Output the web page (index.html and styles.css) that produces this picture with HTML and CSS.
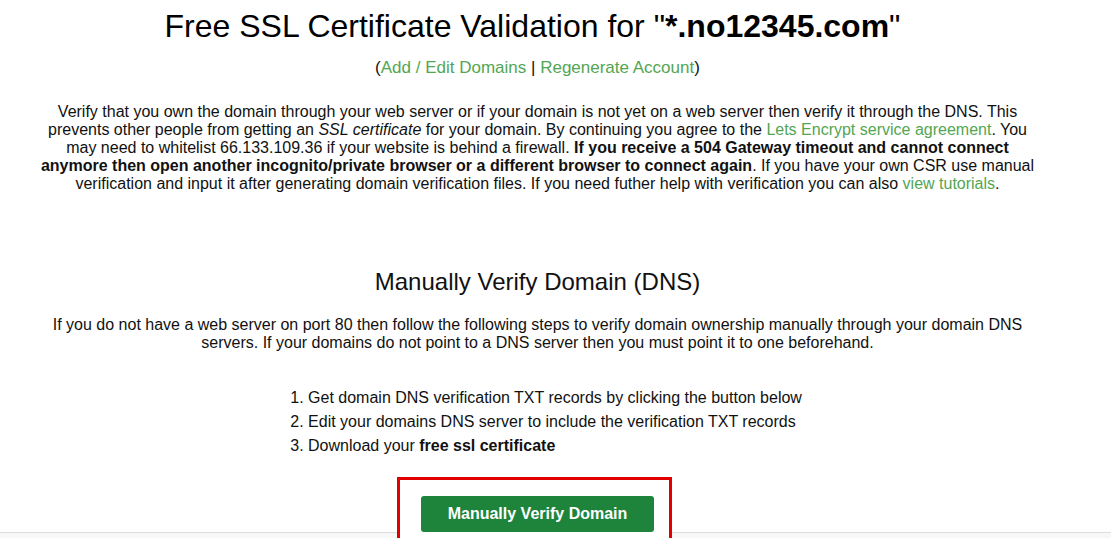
FILE: index.html
```html
<!DOCTYPE html>
<html lang="en">
<head>
  <meta charset="UTF-8" />
  <meta name="viewport" content="width=device-width, initial-scale=1.0"/>
  <title>Free SSL Certificate Validation</title>
  <link rel="stylesheet" href="styles.css">
</head>
<body>
  <main class="page">
    <h1 class="title">Free SSL Certificate Validation for "<strong>*.no12345.com</strong>"</h1>
    <p class="account-links">(<a href="#">Add / Edit Domains</a> | <a href="#">Regenerate Account</a>)</p>

    <p class="intro">
      Verify that you own the domain through your web server or if your domain is not yet on a web server then verify it through the DNS. This
      prevents other people from getting an <em>SSL certificate</em> for your domain. By continuing you agree to the <a href="#">Lets Encrypt service agreement</a>. You
      may need to whitelist 66.133.109.36 if your website is behind a firewall. <strong>If you receive a 504 Gateway timeout and cannot connect
      anymore then open another incognito/private browser or a different browser to connect again</strong>. If you have your own CSR use manual
      verification and input it after generating domain verification files. If you need futher help with verification you can also <a href="#">view tutorials</a>.
    </p>

    <section class="manual">
      <h2 class="manual-title">Manually Verify Domain (DNS)</h2>
      <p class="manual-text">
        If you do not have a web server on port 80 then follow the following steps to verify domain ownership manually through your domain DNS
        servers. If your domains do not point to a DNS server then you must point it to one beforehand.
      </p>

      <div class="steps-wrap">
        <ol class="steps">
          <li>Get domain DNS verification TXT records by clicking the button below</li>
          <li>Edit your domains DNS server to include the verification TXT records</li>
          <li>Download your <strong>free ssl certificate</strong></li>
        </ol>
      </div>

      <div class="actions">
        <div class="button-wrap">
          <span class="highlight"></span>
          <button class="btn-verify">Manually Verify Domain</button>
        </div>
      </div>
    </section>
  </main>

  <footer class="footer"></footer>
</body>
</html>
```

FILE: styles.css
```css
* {
  margin: 0;
  padding: 0;
  box-sizing: border-box;
}

body {
  font-family: "Liberation Sans", Arial, sans-serif;
  font-size: 16px;
  color: #111;
  background-color: #fff;
}

a {
  color: #53a653;
  text-decoration: none;
}

.page {
  width: 1075px;
  text-align: center;
}

.title {
  margin-top: 8px;
  padding-right: 10px;
  font-size: 32px;
  font-weight: normal;
  line-height: 36px;
  color: #000;
}

.title strong {
  font-weight: bold;
}

.account-links {
  margin-top: 15px;
  font-size: 17px;
  line-height: 18px;
}

.intro {
  margin-top: 26px;
  padding: 0 36px;
  line-height: 18px;
}

.manual-title {
  margin-top: 75px;
  font-size: 24px;
  font-weight: normal;
  line-height: 28px;
}

.manual-text {
  margin-top: 20px;
  padding: 0 36px;
  line-height: 18px;
}

.steps-wrap {
  display: flex;
  justify-content: center;
  margin-top: 34px;
  padding-right: 5px;
}

.steps {
  padding-left: 40px;
  text-align: left;
  line-height: 24px;
}

.actions {
  display: flex;
  justify-content: center;
  margin-top: 38px;
}

.button-wrap {
  position: relative;
}

.highlight {
  position: absolute;
  top: -19px;
  left: -24px;
  right: -18px;
  bottom: -6px;
  border: 3px solid #e00000;
  border-bottom: none;
  background-color: #fff;
}

.btn-verify {
  position: relative;
  display: block;
  width: 233px;
  height: 36px;
  background-color: #1e843b;
  color: #fff;
  font-family: inherit;
  font-size: 16px;
  font-weight: bold;
  border: none;
  border-radius: 3px;
  cursor: pointer;
}

.footer {
  height: 6px;
  border-top: 1px solid #ddd;
  background-color: #f7f7f7;
}
```
